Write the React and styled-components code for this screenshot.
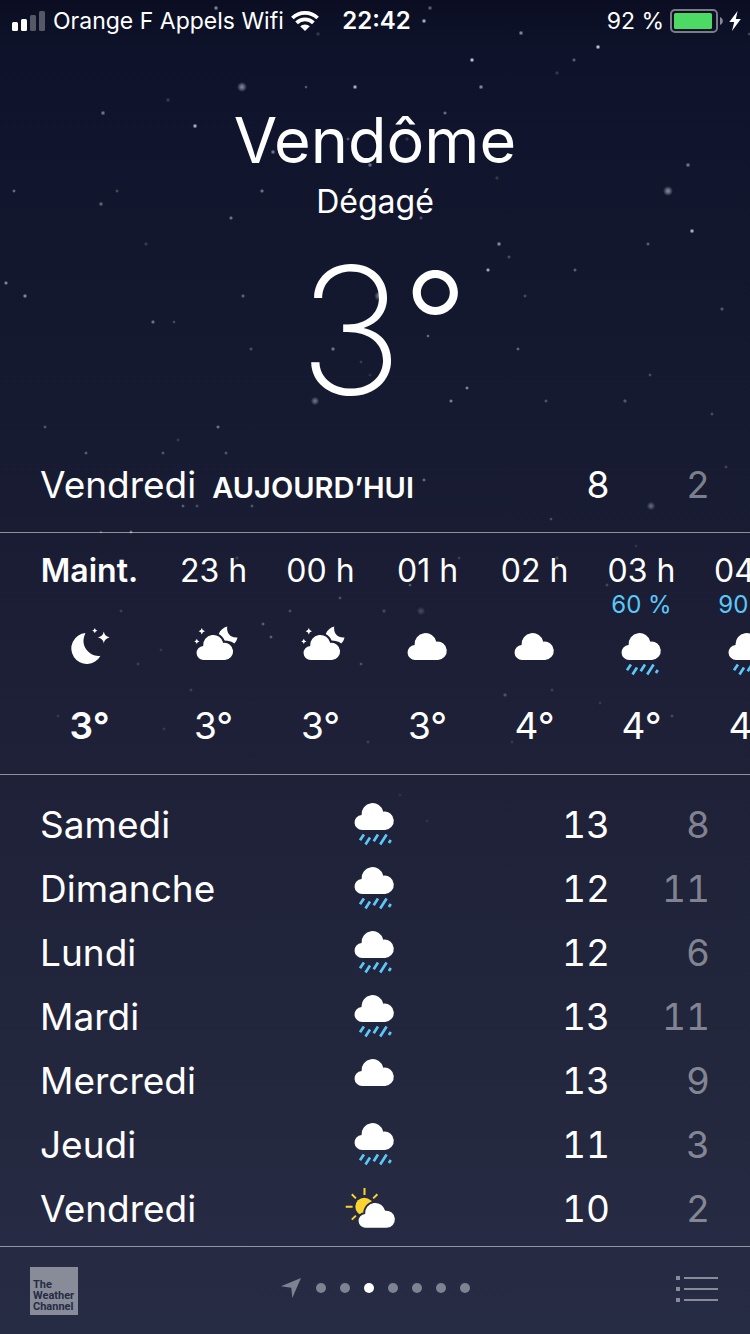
import React from "react";
import styled, { createGlobalStyle } from "styled-components";

const GlobalStyle = createGlobalStyle`
  *, *::before, *::after { box-sizing: border-box; }
  body { margin: 0; background: #262b43; }
  ul, ol, p, h1 { margin: 0; padding: 0; list-style: none; font-weight: inherit; }
`;

const Screen = styled.div`
  position: relative;
  isolation: isolate;
  display: flex;
  flex-direction: column;
  min-height: 100vh;
  overflow: hidden;
  color: #fff;
  font-family: Inter, "Liberation Sans", sans-serif;
  font-size: 37px;
  background: linear-gradient(#0b0e22 0%, #0e132b 4%, #14182f 24%, #1c1f36 50%, #24283f 84%, #272c45 100%);
`;

const Sky = styled.svg`
  position: absolute;
  inset: 0;
  z-index: -1;
  width: 100%;
  height: 100%;
`;

const StatusBar = styled.div`
  display: grid;
  grid-template-columns: 1fr auto 1fr;
  align-items: center;
  height: 40px;
  padding: 1px 9px 0 12px;
  font-size: 23px;
  white-space: nowrap;
`;

const StatusGroup = styled.div`
  display: flex;
  align-items: center;
  justify-content: ${(p) => p.$justify || "flex-start"};
  gap: ${(p) => p.$gap}px;
`;

const Clock = styled.time`
  font-size: 24px;
  font-weight: 600;
`;

const Header = styled.header`
  display: flex;
  flex-direction: column;
  align-items: center;
  padding-top: 60px;
`;

const City = styled.h1`
  font-size: 63px;
  line-height: 80px;
`;

const Condition = styled.p`
  font-size: 32px;
  line-height: 44px;
`;

const Temperature = styled.p`
  height: 208px;
  padding: 2px 0 0 16px;
  font-size: 176px;
  line-height: 208px;
  font-weight: 200;
`;

const BigDegree = styled.span`
  font-size: 142px;
  line-height: 1;
  font-weight: 300;
  vertical-align: 20px;
`;

const DayGrid = styled.div`
  display: grid;
  grid-template-columns: ${(p) => (p.$today ? "1fr auto" : "1fr 48px 1fr")};
  align-items: center;
  height: 64px;
  padding: 0 40px 2px;
  font-variant-numeric: tabular-nums;
`;

const Today = styled.section`
  padding: 21px 0 15px;
`;

const TodayTag = styled.strong`
  margin-left: 16px;
  font-size: 29px;
  font-weight: 600;
`;

const Range = styled.span`
  display: flex;
  justify-content: flex-end;
`;

const Degree = styled.span`
  width: 100px;
  text-align: right;
  color: ${(p) => (p.$low ? "rgba(255, 255, 255, 0.45)" : "#fff")};
`;

const Hours = styled.ol`
  display: flex;
  overflow: hidden;
  padding: 18px 0 20px 36px;
  border: solid rgba(255, 255, 255, 0.5);
  border-width: 1px 0;
`;

const Hour = styled.li`
  display: flex;
  flex: 0 0 107px;
  flex-direction: column;
  align-items: center;
  margin-right: ${(p) => (p.$now ? 17 : 0)}px;
  font-weight: ${(p) => (p.$now ? 600 : 400)};
  white-space: nowrap;
`;

const HourLabel = styled.span`
  font-size: 32px;
  line-height: 40px;
`;

const Chance = styled.span`
  height: 28px;
  margin-bottom: 4px;
  font-size: 24px;
  line-height: 28px;
  font-weight: 400;
  color: #5ac8fa;
`;

const HourTemp = styled.span`
  margin-top: 13px;
  line-height: 56px;
`;

const Days = styled.ul`
  padding: 18px 0 5px;
`;

const Glyph = styled.svg`
  display: block;
  flex: none;
  overflow: visible;
`;

const Footer = styled.footer`
  display: grid;
  grid-template-columns: 1fr auto 1fr;
  align-items: center;
  flex: 1 0 87px;
  padding: 0 30px;
  border-top: 1px solid rgba(255, 255, 255, 0.5);
`;

const Logo = styled.a`
  display: flex;
  flex-direction: column;
  justify-content: flex-end;
  width: 48px;
  height: 48px;
  padding: 0 0 3px 3px;
  background: #888b98;
  color: #272c45;
  font: 700 11px/11px Roboto, sans-serif;
  text-decoration: none;
`;

const Pages = styled.nav`
  display: flex;
  align-items: center;
  gap: 14px;
  padding-bottom: 5px;
`;

const Dot = styled.button`
  width: 10px;
  height: 10px;
  padding: 0;
  border: 0;
  border-radius: 50%;
  background: ${(p) => (p.$active ? "#fff" : "#7f8290")};
`;

const IconButton = styled.button`
  justify-self: end;
  display: flex;
  padding: 2px 2px 5px;
  border: 0;
  background: none;
`;

/* x, y, radius, opacity */
const STARS = [
  [216, 8, 2, 0.6], [318, 34, 2, 0.2], [242, 87, 4, 0.5], [306, 87, 1.5, 0.4], [355, 87, 2, 0.8],
  [168, 100, 2, 0.2], [103, 113, 2, 0.5], [195, 126, 2, 0.8], [273, 152, 2, 0.5], [14, 191, 1.6, 0.5],
  [117, 191, 1.6, 0.3], [101, 204, 2, 0.4], [262, 191, 1.8, 0.5], [231, 218, 1.8, 0.5], [348, 139, 1.6, 0.4],
  [370, 165, 2, 0.5], [430, 8, 2, 0.4], [424, 21, 2, 0.8], [521, 33, 2, 0.6], [472, 60, 2, 0.9], [574, 60, 1.8, 0.4],
  [598, 47, 2, 0.9], [557, 73, 1.8, 0.2], [481, 87, 2, 0.6], [445, 113, 1.7, 0.5], [497, 178, 1.8, 0.2],
  [688, 165, 2, 0.5], [668, 191, 4, 0.5], [749, 34, 1.5, 0.3], [407, 139, 1.8, 0.2], [421, 218, 1.8, 0.3],
  [146, 244, 1.8, 0.2], [6, 283, 1.8, 0.6], [25, 296, 1.9, 0.6], [243, 296, 1.8, 0.4], [153, 322, 1.8, 0.5],
  [174, 322, 1.5, 0.3], [251, 349, 1.7, 0.3], [333, 349, 1.9, 0.5], [361, 362, 1.6, 0.2], [370, 375, 1.6, 0.15],
  [315, 401, 3.4, 0.4], [45, 427, 1.6, 0.35], [218, 427, 1.7, 0.5], [178, 440, 1.6, 0.2], [86, 453, 1.6, 0.4],
  [163, 453, 1.6, 0.35], [226, 453, 1.6, 0.35], [172, 493, 1.6, 0.35], [183, 506, 1.6, 0.4], [197, 506, 1.6, 0.3],
  [252, 506, 1.6, 0.35], [101, 532, 1.5, 0.3], [131, 532, 1.6, 0.5], [379, 296, 3.8, 0.45],
  [499, 244, 2, 0.6], [509, 257, 1.7, 0.3], [488, 270, 1.8, 0.8], [575, 270, 1.7, 0.4], [525, 296, 1.6, 0.3],
  [648, 244, 1.7, 0.4], [692, 231, 2, 0.8], [722, 309, 1.8, 0.35], [428, 336, 1.5, 0.5], [518, 349, 1.6, 0.45],
  [650, 375, 1.6, 0.3], [467, 388, 1.7, 0.6], [451, 401, 1.7, 0.6], [546, 401, 1.6, 0.35], [625, 401, 1.8, 0.35],
  [712, 414, 1.6, 0.3], [424, 480, 1.6, 0.5], [726, 467, 1.6, 0.25], [651, 506, 3.4, 0.35], [551, 519, 1.5, 0.3],
  [121, 611, 1.6, 0.2], [290, 611, 1.6, 0.3], [263, 624, 1.6, 0.4], [271, 637, 1.6, 0.4], [340, 598, 1.6, 0.3],
  [361, 664, 1.6, 0.3], [138, 664, 1.6, 0.2], [161, 650, 1.6, 0.15], [191, 690, 1.6, 0.2], [58, 716, 1.6, 0.15],
  [164, 729, 1.6, 0.15], [368, 742, 1.6, 0.2], [237, 558, 1.8, 0.2], [459, 558, 1.6, 0.2], [410, 585, 1.5, 0.4],
  [384, 611, 1.8, 0.25], [421, 611, 3.4, 0.2], [557, 558, 1.8, 0.25], [636, 546, 1.5, 0.15], [607, 585, 1.6, 0.25],
  [505, 695, 1.8, 0.3], [552, 690, 1.6, 0.2], [600, 703, 1.6, 0.15], [672, 716, 1.6, 0.25], [512, 742, 1.6, 0.15],
  [400, 795, 1.6, 0.1], [427, 821, 1.6, 0.1],
];

const CLOUD =
  "M11.5 36A7.5 7.5 0 0 1 10.6 21A11 11 0 0 1 32.3 17.7A9.2 9.2 0 1 1 34 36Z";

const sparkle = (x, y, r) =>
  `M${x} ${y - r}Q${x + r * 0.15} ${y - r * 0.15} ${x + r} ${y}Q${x + r * 0.15} ${y + r * 0.15} ${x} ${y + r}Q${x - r * 0.15} ${y + r * 0.15} ${x - r} ${y}Q${x - r * 0.15} ${y - r * 0.15} ${x} ${y - r}Z`;

const ICONS = {
  cloud: <path d={CLOUD} />,
  rain: (
    <>
      <path d={CLOUD} />
      <path
        d="M12.9 40.5L9 46.3M19 43.5L14.5 50.4M27 40.5L22.7 47.2M35.6 40.5L29.2 50.4M39.8 46L37.9 48.9"
        stroke="#5ac8fa"
        strokeWidth="2.7"
      />
    </>
  ),
  moon: (
    <>
      <path d="M19.5 9A15.5 15.5 0 1 0 34.5 31.7C25.5 33.5 12.5 23 19.5 9Z" />
      <path d={sparkle(28.8, 6.7, 2.6)} />
      <path d={sparkle(37.8, 13.4, 5.8)} />
    </>
  ),
  cloudyMoon: (
    <>
      <path d={CLOUD} transform="translate(3.3 2.5) scale(.93)" />
      <path d="M37.2 2.5C36.4 8.5 39.5 14 47.5 13.4C47 16 45.8 18 44.2 19.4C41.5 17 38 16.8 34.6 16.4C33.5 13.5 31.5 11.3 28.7 9.9C30.3 6.3 33.3 3.5 37.2 2.5Z" />
      <path d={sparkle(11.8, 7.3, 3.2)} />
      <path d={sparkle(6.8, 17.4, 2.6)} />
    </>
  ),
  sunny: (
    <>
      <mask id="sun-gap" maskUnits="userSpaceOnUse" x="-10" y="0" width="60" height="62">
        <rect x="-10" width="60" height="62" fill="#fff" />
        <path d={CLOUD} transform="translate(4.3 16.5) scale(.925)" fill="#000" stroke="#000" strokeWidth="4" />
      </mask>
      <circle cx="13.3" cy="28.7" r="9" fill="#fdd32f" mask="url(#sun-gap)" />
      <path
        d="M13.5 10V17M-5.3 28.7H1.6M.8 16.2L4.9 20.4M26.4 16.2L22.2 20.4M.8 41.6L4.9 37.6"
        stroke="#fdd32f"
        strokeWidth="2"
      />
      <path d={CLOUD} transform="translate(4.3 16.5) scale(.925)" />
    </>
  ),
};

const LABELS = {
  cloud: "Nuageux",
  rain: "Pluie",
  moon: "Nuit claire",
  cloudyMoon: "Nuit nuageuse",
  sunny: "Éclaircies",
};

const WeatherIcon = ({ kind }) => (
  <Glyph width="48" height="62" viewBox="0 -1 48 62" fill="#fff" role="img" aria-label={LABELS[kind]}>
    {ICONS[kind]}
  </Glyph>
);

const HOURS = [
  { label: "Maint.", icon: "moon", temp: 3, now: true },
  { label: "23 h", icon: "cloudyMoon", temp: 3 },
  { label: "00 h", icon: "cloudyMoon", temp: 3 },
  { label: "01 h", icon: "cloud", temp: 3 },
  { label: "02 h", icon: "cloud", temp: 4 },
  { label: "03 h", icon: "rain", temp: 4, chance: 60 },
  { label: "04 h", icon: "rain", temp: 4, chance: 90 },
];

const DAYS = [
  { name: "Samedi", icon: "rain", high: 13, low: 8 },
  { name: "Dimanche", icon: "rain", high: 12, low: 11 },
  { name: "Lundi", icon: "rain", high: 12, low: 6 },
  { name: "Mardi", icon: "rain", high: 13, low: 11 },
  { name: "Mercredi", icon: "cloud", high: 13, low: 9 },
  { name: "Jeudi", icon: "rain", high: 11, low: 3 },
  { name: "Vendredi", icon: "sunny", high: 10, low: 2 },
];

const PAGE_COUNT = 7;
const ACTIVE_PAGE = 2;

const DayRange = ({ high, low }) => (
  <Range>
    <Degree>{high}</Degree>
    <Degree $low>{low}</Degree>
  </Range>
);

export default function App() {
  return (
    <Screen>
      <GlobalStyle />
      <Sky viewBox="0 0 750 1334" preserveAspectRatio="xMidYMin slice" aria-hidden="true">
        <defs>
          <radialGradient id="star">
            <stop offset="0.2" stopColor="#e4e6f5" />
            <stop offset="1" stopColor="#e4e6f5" stopOpacity="0" />
          </radialGradient>
        </defs>
        {STARS.map(([x, y, r, o]) => (
          <circle key={`${x}-${y}`} cx={x} cy={y} r={r * 1.25} fill="url(#star)" opacity={o} />
        ))}
      </Sky>

      <StatusBar>
        <StatusGroup $gap={7}>
          <Glyph width="34" height="20" viewBox="0 0 34 20" fill="#fff" aria-hidden="true">
            <rect y="11" width="6" height="9" rx="1.5" />
            <rect x="9" y="8" width="6" height="12" rx="1.5" />
            <rect x="18" y="4" width="6" height="16" rx="1.5" opacity=".3" />
            <rect x="27" width="6" height="20" rx="1.5" opacity=".3" />
          </Glyph>
          <span>Orange F Appels Wifi</span>
          <Glyph width="28" height="20" viewBox="0 0 28 20" fill="none" stroke="#fff" strokeWidth="3.8" aria-hidden="true">
            <path d="M1.4 7A18 18 0 0 1 26.6 7" />
            <path d="M5.6 11.9A12 12 0 0 1 22.4 11.9" />
            <path d="M14 20L9.2 15.3A7 7 0 0 1 18.8 15.3Z" fill="#fff" stroke="none" />
          </Glyph>
        </StatusGroup>
        <Clock>22:42</Clock>
        <StatusGroup $gap={6} $justify="flex-end">
          <span>92 %</span>
          <Glyph width="53" height="24" viewBox="0 0 53 24" aria-hidden="true">
            <rect x="1" y="1" width="46" height="22" rx="4" fill="none" stroke="#fff" strokeOpacity=".45" strokeWidth="2" />
            <rect x="4" y="4" width="38" height="16" rx="1.5" fill="#4cd964" />
            <path d="M50 8C53.8 9.6 53.8 14.4 50 16Z" fill="#fff" fillOpacity=".5" />
          </Glyph>
          <Glyph width="12" height="20" viewBox="0 0 12 20" fill="#fff" aria-hidden="true">
            <path d="M8.6 0L0.3 11H5.2L3 20L11.8 8H6.8Z" />
          </Glyph>
        </StatusGroup>
      </StatusBar>

      <Header>
        <City>Vendôme</City>
        <Condition>Dégagé</Condition>
        <Temperature>
          3<BigDegree>°</BigDegree>
        </Temperature>
      </Header>

      <Today>
        <DayGrid $today>
          <span>
            Vendredi
            <TodayTag>AUJOURD’HUI</TodayTag>
          </span>
          <DayRange high={8} low={2} />
        </DayGrid>
      </Today>

      <Hours>
        {HOURS.map((h) => (
          <Hour key={h.label} $now={h.now}>
            <HourLabel>{h.label}</HourLabel>
            <Chance>{h.chance ? `${h.chance} %` : ""}</Chance>
            <WeatherIcon kind={h.icon} />
            <HourTemp>{h.temp}°</HourTemp>
          </Hour>
        ))}
      </Hours>

      <Days>
        {DAYS.map((d) => (
          <DayGrid as="li" key={d.name}>
            <span>{d.name}</span>
            <WeatherIcon kind={d.icon} />
            <DayRange high={d.high} low={d.low} />
          </DayGrid>
        ))}
      </Days>

      <Footer>
        <Logo href="#weather-channel">
          <span>The</span>
          <span>Weather</span>
          <span>Channel</span>
        </Logo>
        <Pages aria-label="Villes">
          <Glyph width="22" height="22" viewBox="0 0 22 22" fill="#7f8290" aria-hidden="true">
            <path d="M21 1L12.3 21L11.3 10.7L1 9.3Z" />
          </Glyph>
          {Array.from({ length: PAGE_COUNT }, (_, i) => (
            <Dot key={i} type="button" $active={i === ACTIVE_PAGE} aria-label={`Ville ${i + 1}`} />
          ))}
        </Pages>
        <IconButton type="button" aria-label="Liste des villes">
          <Glyph width="42" height="26" viewBox="0 0 42 26" fill="#888b98" aria-hidden="true">
            <path d="M0 0H4V4H0ZM0 11H4V15H0ZM0 22H4V26H0ZM8 1H42V3H8ZM8 12H42V14H8ZM8 23H42V25H8Z" />
          </Glyph>
        </IconButton>
      </Footer>
    </Screen>
  );
}
